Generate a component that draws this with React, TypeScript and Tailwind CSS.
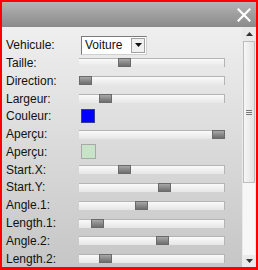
import React from "react";

const rows: { label: string; kind: "slider" | "color" | "preview"; pos?: number }[] = [
  { label: "Taille:", kind: "slider", pos: 39 },
  { label: "Direction:", kind: "slider", pos: 0 },
  { label: "Largeur:", kind: "slider", pos: 20 },
  { label: "Couleur:", kind: "color" },
  { label: "Aperçu:", kind: "slider", pos: 133 },
  { label: "Aperçu:", kind: "preview" },
  { label: "Start.X:", kind: "slider", pos: 39 },
  { label: "Start.Y:", kind: "slider", pos: 79 },
  { label: "Angle.1:", kind: "slider", pos: 56 },
  { label: "Length.1:", kind: "slider", pos: 12 },
  { label: "Angle.2:", kind: "slider", pos: 77 },
  { label: "Length.2:", kind: "slider", pos: 20 },
];

function Slider({ pos }: { pos: number }) {
  return (
    <div className="relative h-[9px] w-[146px] border-t border-r border-[#b4b4b4] bg-gradient-to-b from-[#fafafa] to-[#e6e6e6]">
      <div
        className="absolute top-[-1px] h-[9px] w-[13px] border border-[#6a6a6a] bg-gradient-to-b from-[#a8a8a8] to-[#6e6e6e]"
        style={{ left: pos }}
      />
    </div>
  );
}

export default function App() {
  return (
    <div
      className="w-[258px] h-[270px] border-t-2 border-x-2 border-b-[3px] border-[#ff0000] flex flex-col overflow-hidden"
      style={{ fontFamily: '"Liberation Sans", Arial, sans-serif' }}
    >
      <div className="h-[25px] shrink-0 bg-gradient-to-b from-[#b4b4b4] to-[#8a8a8a] flex items-center justify-end pr-[5px]">
        <svg width="14" height="14" viewBox="0 0 14 14">
          <path d="M1.5 1.5 L12.5 12.5 M12.5 1.5 L1.5 12.5" stroke="#ffffff" strokeWidth="2.2" strokeLinecap="square" />
        </svg>
      </div>
      <div className="flex-1 flex bg-gradient-to-b from-[#efefef] to-[#c6c6c6] min-h-0">
        <div className="flex-1 pl-[4px] pt-[9px] text-[12px] text-[#111]">
          <div className="h-[18px] flex items-center">
            <div className="w-[75px]">Vehicule:</div>
            <div className="h-[19px] w-[66px] bg-white border border-[#7a7a7a] border-r-[#d0d0d0] border-b-[#d0d0d0] flex items-center justify-between pl-[3px] pr-[1px]">
              <span>Voiture</span>
              <div className="h-[15px] w-[14px] bg-[#f0f0f0] border border-[#a0a0a0] flex items-center justify-center">
                <svg width="7" height="4" viewBox="0 0 7 4">
                  <path d="M0 0 H7 L3.5 4 Z" fill="#111" />
                </svg>
              </div>
            </div>
          </div>
          {rows.map((r, i) => (
            <div key={i} className="h-[17.8px] flex items-center">
              <div className="w-[73px]">{r.label}</div>
              {r.kind === "slider" && <Slider pos={r.pos ?? 0} />}
              {r.kind === "color" && (
                <div className="ml-[2px] h-[14px] w-[14px] bg-[#0000ff] border border-[#3a3a8a]" />
              )}
              {r.kind === "preview" && (
                <div className="ml-[2px] h-[15px] w-[15px] bg-[#c8e4c8] border border-[#a8a8a8]" />
              )}
            </div>
          ))}
        </div>
        <div className="w-[14px] shrink-0 bg-[#eaeaea] flex flex-col items-stretch">
          <div className="h-[14px] flex items-center justify-center">
            <svg width="7" height="4" viewBox="0 0 7 4">
              <path d="M0 4 H7 L3.5 0 Z" fill="#333" />
            </svg>
          </div>
          <div className="h-[142px] mx-[1px] border border-[#bdbdbd] bg-gradient-to-r from-[#f6f6f6] to-[#e4e4e4] flex items-center justify-center">
            <div className="flex flex-col gap-[1px]">
              <div className="h-px w-[6px] bg-[#777]" />
              <div className="h-px w-[6px] bg-[#777]" />
              <div className="h-px w-[6px] bg-[#777]" />
            </div>
          </div>
          <div className="flex-1 mx-[1px] bg-[#f7f7f7]" />
          <div className="h-[12px] flex items-center justify-center">
            <svg width="7" height="4" viewBox="0 0 7 4">
              <path d="M0 0 H7 L3.5 4 Z" fill="#333" />
            </svg>
          </div>
        </div>
      </div>
    </div>
  );
}
